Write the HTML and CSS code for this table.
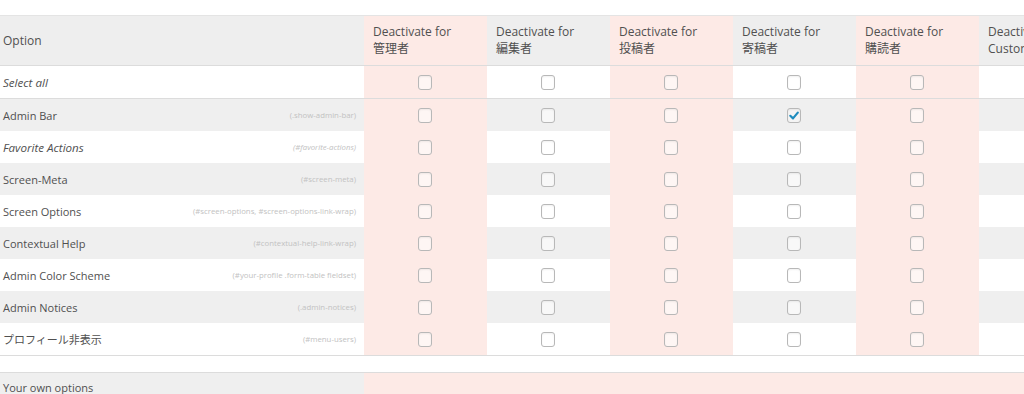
FILE: index.html
```html
<!DOCTYPE html>
<html lang="ja">
<head>
  <meta charset="UTF-8">
  <title>Adminimize</title>
  <link rel="stylesheet" href="styles.css">
</head>
<body>

<div class="grid">
  <div class="row head">
    <div class="cell opt">Option</div>
    <div class="cell role">Deactivate for<br>管理者</div>
    <div class="cell role">Deactivate for<br>編集者</div>
    <div class="cell role">Deactivate for<br>投稿者</div>
    <div class="cell role">Deactivate for<br>寄稿者</div>
    <div class="cell role">Deactivate for<br>購読者</div>
    <div class="cell role">Deactivate for<br>Customer</div>
  </div>

  <div class="row sel">
    <div class="cell opt"><em>Select all</em></div>
    <div class="cell box"><span class="cb"></span></div>
    <div class="cell box"><span class="cb"></span></div>
    <div class="cell box"><span class="cb"></span></div>
    <div class="cell box"><span class="cb"></span></div>
    <div class="cell box"><span class="cb"></span></div>
    <div class="cell box"></div>
  </div>

  <div class="row alt">
    <div class="cell opt">Admin Bar<span class="sel-id">(.show-admin-bar)</span></div>
    <div class="cell box"><span class="cb"></span></div>
    <div class="cell box"><span class="cb"></span></div>
    <div class="cell box"><span class="cb"></span></div>
    <div class="cell box"><span class="cb on"><svg viewBox="0 0 14 15" width="14" height="15"><path d="M3.3 7.8 L6 10.4 L10.8 4.6" fill="none" stroke="#1e8cbe" stroke-width="2.2" stroke-linecap="round" stroke-linejoin="round"/></svg></span></div>
    <div class="cell box"><span class="cb"></span></div>
    <div class="cell box"></div>
  </div>

  <div class="row">
    <div class="cell opt"><em>Favorite Actions</em><span class="sel-id"><em>(#favorite-actions)</em></span></div>
    <div class="cell box"><span class="cb"></span></div>
    <div class="cell box"><span class="cb"></span></div>
    <div class="cell box"><span class="cb"></span></div>
    <div class="cell box"><span class="cb"></span></div>
    <div class="cell box"><span class="cb"></span></div>
    <div class="cell box"></div>
  </div>

  <div class="row alt">
    <div class="cell opt">Screen-Meta<span class="sel-id">(#screen-meta)</span></div>
    <div class="cell box"><span class="cb"></span></div>
    <div class="cell box"><span class="cb"></span></div>
    <div class="cell box"><span class="cb"></span></div>
    <div class="cell box"><span class="cb"></span></div>
    <div class="cell box"><span class="cb"></span></div>
    <div class="cell box"></div>
  </div>

  <div class="row">
    <div class="cell opt">Screen Options<span class="sel-id">(#screen-options, #screen-options-link-wrap)</span></div>
    <div class="cell box"><span class="cb"></span></div>
    <div class="cell box"><span class="cb"></span></div>
    <div class="cell box"><span class="cb"></span></div>
    <div class="cell box"><span class="cb"></span></div>
    <div class="cell box"><span class="cb"></span></div>
    <div class="cell box"></div>
  </div>

  <div class="row alt">
    <div class="cell opt">Contextual Help<span class="sel-id">(#contextual-help-link-wrap)</span></div>
    <div class="cell box"><span class="cb"></span></div>
    <div class="cell box"><span class="cb"></span></div>
    <div class="cell box"><span class="cb"></span></div>
    <div class="cell box"><span class="cb"></span></div>
    <div class="cell box"><span class="cb"></span></div>
    <div class="cell box"></div>
  </div>

  <div class="row">
    <div class="cell opt">Admin Color Scheme<span class="sel-id">(#your-profile .form-table fieldset)</span></div>
    <div class="cell box"><span class="cb"></span></div>
    <div class="cell box"><span class="cb"></span></div>
    <div class="cell box"><span class="cb"></span></div>
    <div class="cell box"><span class="cb"></span></div>
    <div class="cell box"><span class="cb"></span></div>
    <div class="cell box"></div>
  </div>

  <div class="row alt">
    <div class="cell opt">Admin Notices<span class="sel-id">(.admin-notices)</span></div>
    <div class="cell box"><span class="cb"></span></div>
    <div class="cell box"><span class="cb"></span></div>
    <div class="cell box"><span class="cb"></span></div>
    <div class="cell box"><span class="cb"></span></div>
    <div class="cell box"><span class="cb"></span></div>
    <div class="cell box"></div>
  </div>

  <div class="row last">
    <div class="cell opt">プロフィール非表示<span class="sel-id">(#menu-users)</span></div>
    <div class="cell box"><span class="cb"></span></div>
    <div class="cell box"><span class="cb"></span></div>
    <div class="cell box"><span class="cb"></span></div>
    <div class="cell box"><span class="cb"></span></div>
    <div class="cell box"><span class="cb"></span></div>
    <div class="cell box"></div>
  </div>

  <div class="spacer"></div>

  <div class="row own">
    <div class="cell opt">Your own options</div>
    <div class="cell wide"></div>
  </div>
</div>

</body>
</html>
```

FILE: styles.css
```css
body {
  margin: 0;
  padding-top: 15px;
  overflow: hidden;
  background: #fff;
  font-family: "Open Sans", "Noto Sans CJK JP", sans-serif;
  color: #505050;
}
.grid {
  width: 1102px;
  border-top: 1px solid #e4e4e4;
}
.row {
  display: grid;
  grid-template-columns: 364px repeat(6, 123px);
  height: 32px;
  background: #fff;
}
.row.alt {
  background: #efefef;
}
.cell {
  display: flex;
  align-items: center;
  font-size: 11px;
}
/* role columns 1, 3 and 5 keep the pink tint on every row */
.row > .cell:nth-child(2),
.row > .cell:nth-child(4),
.row > .cell:nth-child(6) {
  background: #fdeae6;
}
.opt {
  justify-content: space-between;
  padding: 0 8px 0 3px;
}
.opt em {
  font-size: 11.6px;
}
.sel-id {
  font-size: 7.8px;
  color: #c2c2c2;
}
.sel-id em {
  font-size: 7.8px;
}
.head {
  height: 49px;
  background: #eeeeee;
  border-bottom: 1px solid #dcdcdc;
}
.head .opt {
  font-size: 12px;
}
.head .role {
  align-items: flex-start;
  padding: 7px 9px 0;
  font-size: 12px;
  line-height: 17px;
  white-space: nowrap;
  overflow: hidden;
}
.sel {
  height: 32px;
  border-bottom: 1px solid #dcdcdc;
}
.last {
  border-bottom: 1px solid #dcdcdc;
}
.box {
  justify-content: center;
  padding-right: 2px;
}
.cb {
  display: block;
  width: 12px;
  height: 13px;
  border: 1px solid #b8b8b8;
  border-radius: 3px;
  background: rgba(255, 255, 255, 0.55);
  box-shadow: inset 0 1px 2px rgba(0, 0, 0, 0.06);
}
.cb.on {
  background: #f4f4f4;
}
.cb svg {
  display: block;
  margin: -1px 0 0 -1px;
}
.spacer {
  height: 16px;
  border-bottom: 1px solid #dcdcdc;
}
.own {
  grid-template-columns: 364px 1fr;
  height: 28px;
  background: #efefef;
}
.own > .cell.wide {
  background: #fdeae6;
}
```
